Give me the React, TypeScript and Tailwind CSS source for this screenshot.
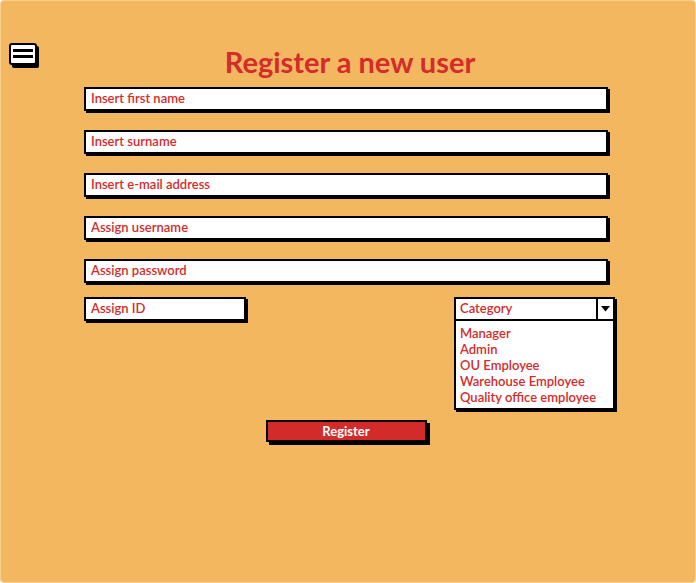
import React from 'react';

const fields = [
  'Insert first name',
  'Insert surname',
  'Insert e-mail address',
  'Assign username',
  'Assign password',
];

const categories = [
  'Manager',
  'Admin',
  'OU Employee',
  'Warehouse Employee',
  'Quality office employee',
];

const MenuIcon = () => (
  <svg width="32" height="28" viewBox="0 0 32 28">
    <rect x="3" y="3" width="27" height="22" rx="2" fill="#000" />
    <rect x="1" y="1" width="26" height="20" rx="2" fill="#fff" stroke="#000" strokeWidth="2" />
    <rect x="4" y="6" width="20" height="3" fill="#000" />
    <rect x="4" y="12" width="20" height="3" fill="#000" />
  </svg>
);

const TextBox = ({ label, className }: { label: string; className?: string }) => (
  <div
    className={`h-6 flex items-center px-[5px] bg-white border-2 border-black shadow-[2px_2px_0_#000] text-[13px] font-semibold text-[#d42b2b] ${className ?? ''}`}
  >
    {label}
  </div>
);

export default function App() {
  return (
    <div
      className="w-[696px] h-[583px] bg-[#f3b760] border border-[#f6cf91] rounded-sm flex"
      style={{ fontFamily: 'Lato, "Open Sans", sans-serif' }}
    >
      <div className="w-[83px] pl-[8px] pt-[42px]">
        <MenuIcon />
      </div>
      <div className="w-[534px] flex flex-col">
        <h1 className="mt-[45px] w-[524px] text-center text-[29px] leading-[32px] font-bold text-[#d42b2b] pl-2">
          Register a new user
        </h1>
        <div className="mt-[9px] w-[524px] flex flex-col gap-[19px]">
          {fields.map((f) => (
            <TextBox key={f} label={f} />
          ))}
        </div>
        <div className="mt-[14px] w-[531px] flex justify-between items-start">
          <TextBox label="Assign ID" className="w-[162px]" />
          <div className="w-[161px] flex flex-col">
            <div className="h-6 flex bg-white border-2 border-black shadow-[2px_2px_0_#000] text-[13px] font-semibold text-[#d42b2b]">
              <div className="flex-1 flex items-center px-[4px] border-r-2 border-black">Category</div>
              <div className="w-[15px] flex items-center justify-center">
                <svg width="9" height="6" viewBox="0 0 9 6">
                  <path d="M0 0 H9 L4.5 5.5 Z" fill="#000" />
                </svg>
              </div>
            </div>
            <div className="h-[89px] bg-white border-2 border-t-0 border-black shadow-[2px_2px_0_#000] px-[4px] pt-[4px] text-[13px] leading-[16px] font-semibold text-[#d42b2b] flex flex-col">
              {categories.map((c) => (
                <span key={c}>{c}</span>
              ))}
            </div>
          </div>
        </div>
        <div className="w-[524px] mt-[10px] flex justify-center">
          <button className="w-[161px] h-[22px] bg-[#d32a2a] border-2 border-black shadow-[3px_3px_0_#000] text-white text-[13px] font-bold">
            Register
          </button>
        </div>
      </div>
    </div>
  );
}
